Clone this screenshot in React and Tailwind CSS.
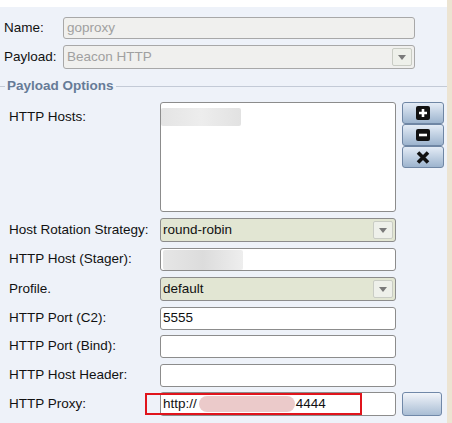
import React from 'react';

const font = { fontFamily: '"Liberation Sans", Arial, sans-serif' };

// Drop-down arrow box used by combo boxes
const Arrow = () => (
  <div className="w-[20px] h-[18px] mr-[2px] border border-[#c9ccc4] rounded-[2px] bg-[#eef0ea] flex items-center justify-center">
    <svg width="8" height="5" viewBox="0 0 8 5"><path d="M0 0h8L4 5z" fill="#7a7a7a" /></svg>
  </div>
);

const TextBox = ({ children, className = '' }) => (
  <div className={`w-[236px] h-[23px] border border-[#8c8c8c] rounded-[3px] bg-white flex items-center px-[2px] text-[13.5px] text-[#111] ${className}`}>
    {children}
  </div>
);

const Combo = ({ value }) => (
  <div className="w-[236px] h-[24px] border border-[#8c8c8c] rounded-[3px] bg-[#e2e6d3] text-[#111] flex items-center justify-between pl-[2px] text-[13.5px]">
    <span>{value}</span>
    <Arrow />
  </div>
);

const Label = ({ children, className = '' }) => (
  <div className={`w-[160px] pl-[9px] text-[13.5px] text-[#111] whitespace-nowrap ${className}`}>{children}</div>
);

const Blur = ({ className }) => <div className={`rounded-[2px] ${className}`} />;

const IconButton = ({ children }) => (
  <div className="w-[42px] h-[22px] border border-[#6f86a4] rounded-[3px] bg-gradient-to-b from-[#e4ecf6] to-[#9db4ce] flex items-center justify-center">
    {children}
  </div>
);

export default function App() {
  return (
    <div className="w-[452px] h-[423px] flex overflow-hidden" style={font}>
      <div className="w-[447px] flex flex-col bg-[#eef2f9]">
        <div className="h-[7px] bg-white" />

        {/* Name / Payload */}
        <div className="flex items-center h-[22px] mt-[10px]">
          <div className="w-[63px] pl-[4px] text-[13.5px] text-[#111]">Name:</div>
          <div className="w-[352px] h-[22px] border border-[#a8a8a8] rounded-[3px] bg-[#f0f0ee] flex items-center px-[3px] text-[13.5px] text-[#a0a0a0]">goproxy</div>
        </div>
        <div className="flex items-center h-[24px] mt-[6px]">
          <div className="w-[63px] pl-[4px] text-[13.5px] text-[#111]">Payload:</div>
          <div className="w-[352px] h-[24px] border border-[#a8a8a8] rounded-[3px] bg-[#f0f0ee] flex items-center justify-between pl-[3px] text-[13.5px] text-[#a0a0a0]">
            <span>Beacon HTTP</span>
            <Arrow />
          </div>
        </div>

        {/* Payload Options legend */}
        <div className="flex items-center h-[16px] mt-[9px]">
          <div className="w-[5px] h-px bg-[#c3cad6]" />
          <span className="px-[2px] text-[13.5px] font-bold text-[#667b97]">Payload Options</span>
          <div className="flex-1 h-px bg-[#c3cad6]" />
        </div>

        {/* HTTP Hosts */}
        <div className="flex mt-[8px]">
          <Label className="pt-[5px]">HTTP Hosts:</Label>
          <div className="w-[236px] h-[110px] border border-[#8c8c8c] rounded-[3px] bg-white pt-[5px]">
            <Blur className="w-[80px] h-[18px] bg-gradient-to-r from-[#e4e4e4] via-[#ededed] to-[#e2e2e2]" />
          </div>
          <div className="ml-[6px] flex flex-col">
            <IconButton>
              <svg width="14" height="14" viewBox="0 0 14 14"><rect width="14" height="14" rx="2" fill="#111" /><path d="M7 3v8M3 7h8" stroke="#fff" strokeWidth="2.6" /></svg>
            </IconButton>
            <IconButton>
              <svg width="14" height="12" viewBox="0 0 14 12"><rect width="14" height="12" rx="2" fill="#111" /><path d="M3 6h8" stroke="#fff" strokeWidth="2.6" /></svg>
            </IconButton>
            <IconButton>
              <svg width="14" height="13" viewBox="0 0 14 13"><path d="M2 1.5l10 10M12 1.5l-10 10" stroke="#111" strokeWidth="3.6" /></svg>
            </IconButton>
          </div>
        </div>

        <div className="flex flex-col gap-[6px] mt-[6px]">
          <div className="flex items-center h-[24px]">
            <Label>Host Rotation Strategy:</Label>
            <Combo value="round-robin" />
          </div>
          <div className="flex items-center h-[23px]">
            <Label>HTTP Host (Stager):</Label>
            <TextBox className="items-end">
              <Blur className="w-[80px] h-[20px] bg-gradient-to-r from-[#e6e6e6] via-[#dcdcdc] to-[#eeeeee]" />
            </TextBox>
          </div>
          <div className="flex items-center h-[24px]">
            <Label>Profile.</Label>
            <Combo value="default" />
          </div>
          <div className="flex items-center h-[22px]">
            <Label>HTTP Port (C2):</Label>
            <TextBox className="h-[22px]">5555</TextBox>
          </div>
          <div className="flex items-center h-[23px]">
            <Label>HTTP Port (Bind):</Label>
            <TextBox />
          </div>
          <div className="flex items-center h-[22px]">
            <Label>HTTP Host Header:</Label>
            <TextBox className="h-[22px]" />
          </div>
          <div className="flex items-center h-[24px]">
            <Label>HTTP Proxy:</Label>
            <div className="relative">
              <TextBox className="h-[24px]">
                <span>http://</span>
                <Blur className="w-[96px] h-[16px] ml-[2px] bg-[#ebcaca] rounded-full" />
                <span className="ml-[1px]">4444</span>
              </TextBox>
              <div className="absolute left-[-15px] top-[1px] w-[217px] h-[22px] border-2 border-[#e0141c]" />
            </div>
            <div className="ml-[6px] w-[40px] h-[24px] border border-[#7088a8] rounded-[3px] bg-gradient-to-b from-[#f2f5fa] to-[#a9bdd4]" />
          </div>
        </div>
      </div>
      <div className="w-[5px] bg-[#ece4d2]" />
    </div>
  );
}
